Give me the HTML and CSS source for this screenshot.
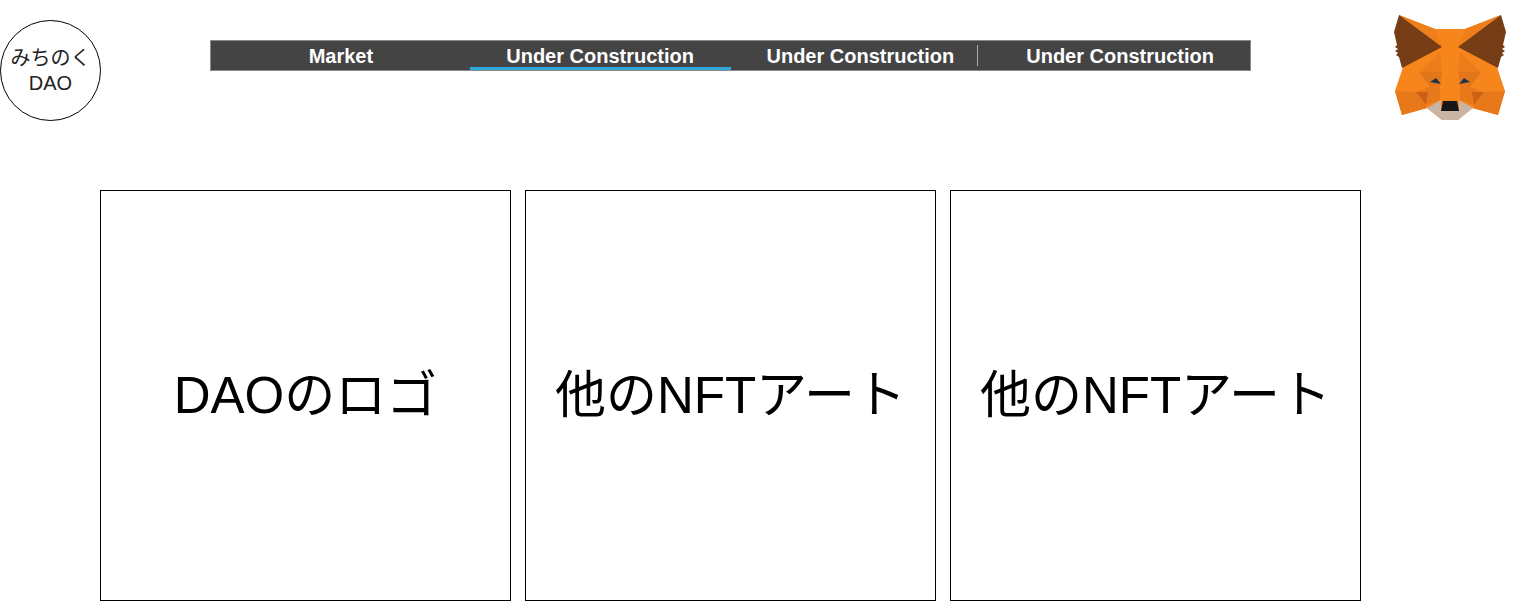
FILE: index.html
```html
<!DOCTYPE html>
<html lang="ja">
<head>
    <meta charset="UTF-8">
    <meta name="viewport" content="width=device-width, initial-scale=1.0">
    <title>みちのくDAO</title>
    <link rel="stylesheet" href="styles.css">
</head>
<body>
    <header class="top">
        <div class="logo">みちのく<br>DAO</div>
        <nav class="menu">
            <a class="menu-item" href="#">Market</a>
            <a class="menu-item active" href="#">Under Construction</a>
            <a class="menu-item split" href="#">Under Construction</a>
            <a class="menu-item" href="#">Under Construction</a>
        </nav>
        <svg class="fox" viewBox="0 0 135 125" aria-label="MetaMask">
            <!-- base of the head -->
            <polygon fill="#f6851b" points="19,10 55,24 85,24 121,10 117,62 125,86 118,110 92,103 78,115 62,115 47,103 22,110 15,86 23,62"/>
            <!-- forehead bands beside the ears -->
            <polygon fill="#ee7f1b" points="19,10 62,42 55,24"/>
            <polygon fill="#ee7f1b" points="121,10 78,42 85,24"/>
            <!-- cheek facets -->
            <polygon fill="#ec7d1b" points="60,47 39,67 62,67"/>
            <polygon fill="#ec7d1b" points="80,47 101,67 78,67"/>
            <polygon fill="#e2761b" points="39,67 62,67 60,80 50,82"/>
            <polygon fill="#e2761b" points="101,67 78,67 80,80 90,82"/>
            <polygon fill="#e8791b" points="50,82 60,80 60,95 46,100 36,87"/>
            <polygon fill="#e8791b" points="90,82 80,80 80,95 94,100 104,87"/>
            <polygon fill="#e8791b" points="15,86 36,87 47,103 22,110"/>
            <polygon fill="#e8791b" points="125,86 104,87 93,103 118,110"/>
            <polygon fill="#cd6116" points="36,87 48,87 46,100"/>
            <polygon fill="#cd6116" points="104,87 92,87 94,100"/>
            <!-- ears -->
            <polygon fill="#763d16" points="19,10 62,42 22,63 19,52 16,50 18,48 15,46 18,44 15,42 17,40 14,27"/>
            <polygon fill="#763d16" points="121,10 78,42 118,63 121,52 124,50 122,48 125,46 122,44 125,42 123,40 126,27"/>
            <!-- eyes -->
            <polygon fill="#233447" points="50,77 56,73 61,79"/>
            <polygon fill="#233447" points="90,77 84,73 79,79"/>
            <!-- snout -->
            <polygon fill="#c9b5a6" points="47,103 61,95 61,106 79,106 79,95 93,103 78,115 62,115"/>
            <polygon fill="#161616" points="63,96 77,96 79,106 61,106"/>
        </svg>
    </header>
    <main class="cards">
        <div class="card">DAOのロゴ</div>
        <div class="card">他のNFTアート</div>
        <div class="card">他のNFTアート</div>
    </main>
</body>
</html>
```

FILE: styles.css
```css
html, body {
    height: 100%;
}
body {
    margin: 0;
    overflow: hidden;
    background-color: #fff;
    color: #000;
    font-family: "Liberation Sans", "Noto Sans CJK JP", sans-serif;
}
.top {
    display: flex;
    align-items: flex-start;
    height: 190px;
}
.logo {
    width: 101px;
    height: 101px;
    margin-top: 20px;
    box-sizing: border-box;
    border: 1px solid #000;
    border-radius: 50%;
    display: flex;
    align-items: center;
    justify-content: center;
    text-align: center;
    font-size: 20px;
    line-height: 25px;
    color: #222;
}
.menu {
    display: flex;
    width: 1041px;
    height: 31px;
    margin: 40px 0 0 109px;
    box-sizing: border-box;
    background-color: #444;
    border: 1px solid #8a8a8a;
}
.menu-item {
    position: relative;
    width: 260px;
    box-sizing: border-box;
    padding-top: 3px;
    text-align: center;
    font-size: 20px;
    line-height: 24px;
    font-weight: bold;
    color: #fff;
    text-decoration: none;
}
.menu-item.active {
    width: 261px;
    margin-left: -1px;
    border-bottom: 3px solid #2fa8dd;
}
.split::after {
    content: "";
    position: absolute;
    top: 4px;
    right: 12px;
    height: 21px;
    border-right: 1px solid #aaa;
}
.fox {
    width: 135px;
    height: 125px;
    margin: 5px 0 0 129px;
    flex: none;
}
.cards {
    display: flex;
    gap: 14px;
    padding-left: 100px;
}
.card {
    width: 411px;
    height: 411px;
    box-sizing: border-box;
    border: 1px solid #000;
    padding-bottom: 10px;
    display: flex;
    align-items: center;
    justify-content: center;
    font-size: 51px;
}
```
